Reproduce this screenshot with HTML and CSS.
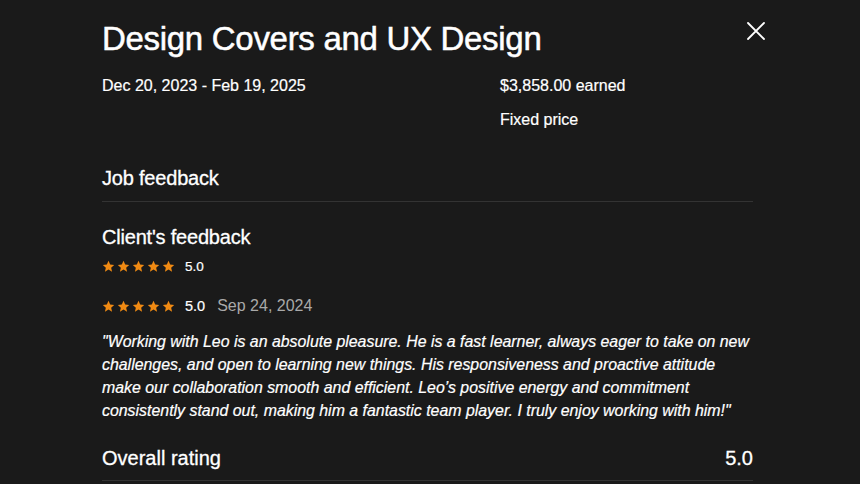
FILE: index.html
```html
<!DOCTYPE html>
<html>
<head>
<meta charset="utf-8">
<link rel="stylesheet" href="styles.css">
</head>
<body>
<div class="modal">
  <div class="head">
    <h1 class="title">Design Covers and UX Design</h1>
    <button class="close" aria-label="Close">
      <svg width="20" height="20" viewBox="0 0 20 20"><path d="M2 2 L18 18 M18 2 L2 18" stroke="#fff" stroke-width="1.8" stroke-linecap="round"/></svg>
    </button>
  </div>
  <div class="meta">
    <div class="col">Dec 20, 2023 - Feb 19, 2025</div>
    <div class="col">
      <div>$3,858.00 earned</div>
      <div class="fixed">Fixed price</div>
    </div>
  </div>
  <h2 class="section">Job feedback</h2>
  <div class="divider"></div>
  <h2 class="sub">Client's feedback</h2>
  <div class="rating small">
    <span class="stars">
      <svg viewBox="0 0 24 24"><path d="M12 1.5l3.1 6.9 7.4.7-5.6 5 1.7 7.4L12 17.6l-6.6 3.9 1.7-7.4-5.6-5 7.4-.7z"/></svg><svg viewBox="0 0 24 24"><path d="M12 1.5l3.1 6.9 7.4.7-5.6 5 1.7 7.4L12 17.6l-6.6 3.9 1.7-7.4-5.6-5 7.4-.7z"/></svg><svg viewBox="0 0 24 24"><path d="M12 1.5l3.1 6.9 7.4.7-5.6 5 1.7 7.4L12 17.6l-6.6 3.9 1.7-7.4-5.6-5 7.4-.7z"/></svg><svg viewBox="0 0 24 24"><path d="M12 1.5l3.1 6.9 7.4.7-5.6 5 1.7 7.4L12 17.6l-6.6 3.9 1.7-7.4-5.6-5 7.4-.7z"/></svg><svg viewBox="0 0 24 24"><path d="M12 1.5l3.1 6.9 7.4.7-5.6 5 1.7 7.4L12 17.6l-6.6 3.9 1.7-7.4-5.6-5 7.4-.7z"/></svg>
    </span>
    <span class="score">5.0</span>
  </div>
  <div class="rating review">
    <span class="stars">
      <svg viewBox="0 0 24 24"><path d="M12 1.5l3.1 6.9 7.4.7-5.6 5 1.7 7.4L12 17.6l-6.6 3.9 1.7-7.4-5.6-5 7.4-.7z"/></svg><svg viewBox="0 0 24 24"><path d="M12 1.5l3.1 6.9 7.4.7-5.6 5 1.7 7.4L12 17.6l-6.6 3.9 1.7-7.4-5.6-5 7.4-.7z"/></svg><svg viewBox="0 0 24 24"><path d="M12 1.5l3.1 6.9 7.4.7-5.6 5 1.7 7.4L12 17.6l-6.6 3.9 1.7-7.4-5.6-5 7.4-.7z"/></svg><svg viewBox="0 0 24 24"><path d="M12 1.5l3.1 6.9 7.4.7-5.6 5 1.7 7.4L12 17.6l-6.6 3.9 1.7-7.4-5.6-5 7.4-.7z"/></svg><svg viewBox="0 0 24 24"><path d="M12 1.5l3.1 6.9 7.4.7-5.6 5 1.7 7.4L12 17.6l-6.6 3.9 1.7-7.4-5.6-5 7.4-.7z"/></svg>
    </span>
    <span class="score">5.0</span>
    <span class="date">Sep 24, 2024</span>
  </div>
  <p class="quote">"Working with Leo is an absolute pleasure. He is a fast learner, always eager to take on new challenges, and open to learning new things. His responsiveness and proactive attitude make our collaboration smooth and efficient. Leo’s positive energy and commitment consistently stand out, making him a fantastic team player. I truly enjoy working with him!"</p>
  <div class="overall">
    <span>Overall rating</span>
    <span>5.0</span>
  </div>
  <div class="divider"></div>
</div>
</body>
</html>
```

FILE: styles.css
```css
html, body {
  margin: 0;
  padding: 0;
  background: #1a1a1a;
  color: #ffffff;
  font-family: "Liberation Sans", Arial, sans-serif;
  overflow: hidden;
}
.modal {
  width: 651px;
  margin-left: 102px;
  padding-top: 18px;
}
.head {
  display: flex;
  justify-content: space-between;
  align-items: flex-start;
}
.title {
  margin: 0;
  font-size: 33px;
  font-weight: 400;
  letter-spacing: -0.3px;
  line-height: 42px;
  -webkit-text-stroke: 0.5px #fff;
}
.close {
  background: none;
  border: 0;
  padding: 0;
  margin: 3px -13px 0 0;
  width: 20px;
  height: 20px;
  cursor: pointer;
}
.close svg { display: block; }
.meta {
  display: flex;
  margin-top: 16px;
  font-size: 16px;
  line-height: 20px;
  -webkit-text-stroke: 0.2px #fff;
}
.meta .col:first-child { width: 398px; }
.fixed { margin-top: 14px; }
.section, .sub {
  margin: 0;
  font-size: 20px;
  font-weight: 400;
  line-height: 24px;
  letter-spacing: -0.2px;
  -webkit-text-stroke: 0.3px #fff;
}
.section { margin-top: 36px; }
.divider {
  height: 1px;
  background: #333333;
}
.section + .divider { margin-top: 11px; }
.sub { margin-top: 23px; }
.rating {
  display: flex;
  align-items: center;
}
.stars { display: flex; gap: 2px; }
.stars svg { width: 13px; height: 13px; fill: #f08a13; display: block; }
.small { margin-top: 9px; height: 16px; }
.small .score { font-size: 13.5px; margin-left: 10px; -webkit-text-stroke: 0.2px #fff; }
.review { margin-top: 23px; height: 18px; }
.review .score { font-size: 14.5px; margin-left: 10px; -webkit-text-stroke: 0.2px #fff; }
.review .date { font-size: 16px; color: #a9a9a9; margin-left: 12px; }
.quote {
  margin: 15px 0 0;
  font-size: 15.9px;
  font-style: italic;
  line-height: 23px;
  -webkit-text-stroke: 0.2px #fff;
}
.overall {
  display: flex;
  justify-content: space-between;
  margin-top: 24px;
  font-size: 20px;
  line-height: 24px;
  padding-bottom: 10px;
  -webkit-text-stroke: 0.3px #fff;
}
```
